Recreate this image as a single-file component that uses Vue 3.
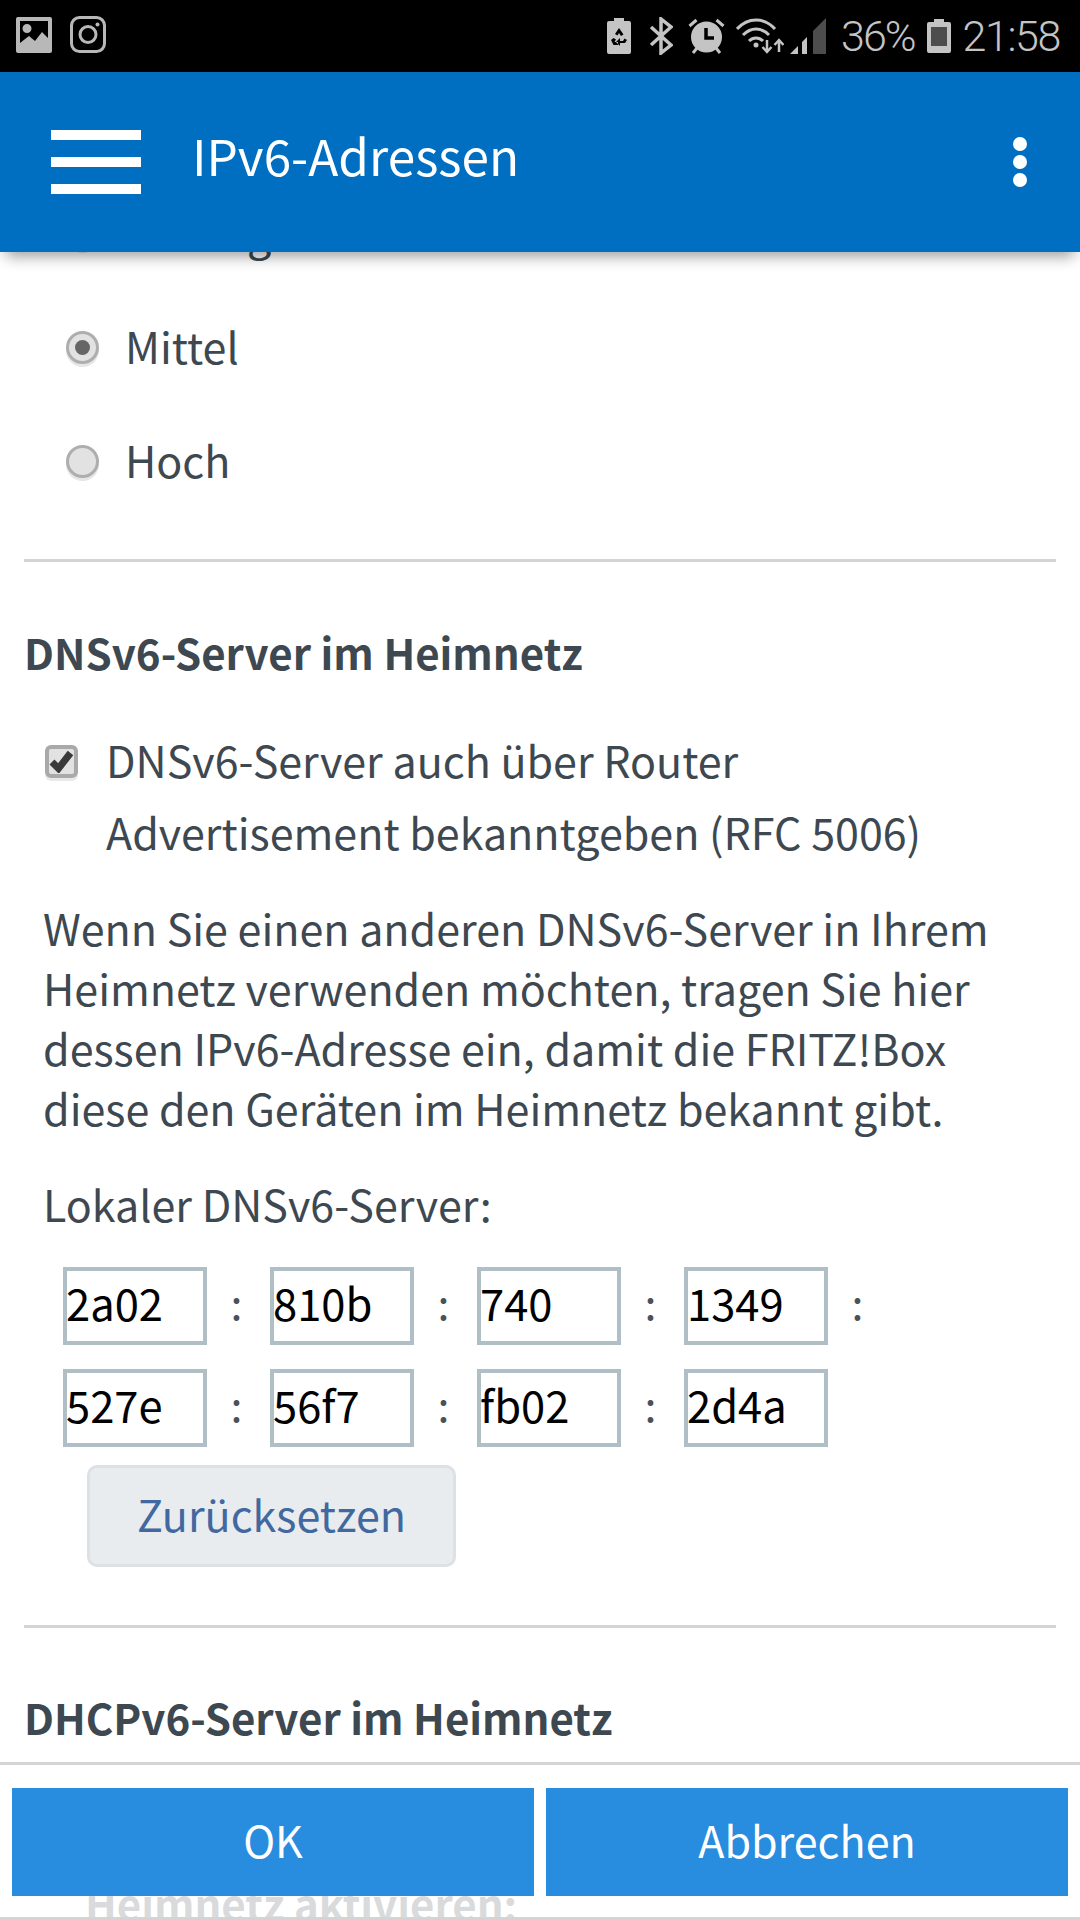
<script setup>
const rows = [
  [{ v: '2a02' }, { v: '810b' }, { v: '740' }, { v: '1349' }],
  [{ v: '527e' }, { v: '56f7' }, { v: 'fb02' }, { v: '2d4a' }],
]
</script>

<template>
  <div class="page">
    <div class="status">
      <div class="status-left">
        <svg width="36" height="36" viewBox="0 0 36 36"><path fill="#b8b8b8" fill-rule="evenodd" d="M2 0h32a2 2 0 0 1 2 2v32a2 2 0 0 1-2 2H2a2 2 0 0 1-2-2V2a2 2 0 0 1 2-2zM4 4v22l9-7 6 5 7-9 6 6V4zM11 7a4.500 4.500 0 1 1 0 9 4.500 4.500 0 0 1 0-9z"/></svg>
        <svg width="36" height="37" viewBox="0 0 36 37" fill="none" stroke="#b8b8b8" stroke-width="3"><rect x="1.500" y="1.500" width="33" height="34" rx="8"/><circle cx="18" cy="18.500" r="8"/><circle cx="27.500" cy="8.500" r="2" fill="#b8b8b8" stroke="none"/></svg>
      </div>
      <div class="status-right">
        <svg width="24" height="36" viewBox="0 0 24 36"><path fill="#c4c4c4" fill-rule="evenodd" d="M7 0h10v3h5a2 2 0 0 1 2 2v29a2 2 0 0 1-2 2H2a2 2 0 0 1-2-2V5a2 2 0 0 1 2-2h5zM12 10l-4 6 2.500 1.500L12 15l2 3 2.500-1.500zM4 22l2.500 5H11v-3H7.500l1.500-2.500-2.500-1.500zM20 22l-2.500-1.500-1.500 2.500H13v-3l-4 4 4 4v-3h5z"/></svg>
        <svg class="ml-18" width="24" height="38" viewBox="0 0 24 38" fill="none" stroke="#c4c4c4" stroke-width="3.500"><path d="M2 10l20 18-10 8V2l10 8L2 28"/></svg>
        <svg class="ml-15" width="37" height="36" viewBox="0 0 37 36"><circle cx="18.500" cy="19" r="15.500" fill="#c4c4c4"/><path d="M1.500 8l7-6M35.500 8l-7-6M5 35l4-5M32 35l-4-5" stroke="#c4c4c4" stroke-width="3" fill="none"/><path d="M18 10v10h8" stroke="#000" stroke-width="3.500" fill="none"/></svg>
        <svg class="ml-11" width="48" height="36" viewBox="0 0 48 36" fill="none" stroke="#c4c4c4" stroke-width="3"><path d="M1 11C12-1 28-1 39 11M7 17c8-8 18-8 26 0M13 23c4-4 10-4 14 0"/><circle cx="20" cy="27" r="2.500" fill="#c4c4c4" stroke="none"/><path d="M31 22v12M26.500 29l4.500 5 4.500-5M43 34V22M38.500 27l4.500-5 4.500 5" stroke-width="2.500"/></svg>
        <svg class="ml-6" width="36" height="36" viewBox="0 0 36 36"><path fill="#c4c4c4" d="M0 36l8-8v8zM12 36V24l5-5v17z"/><path fill="#4d4d4d" d="M23 36V13L36 0v36z"/></svg>
        <span class="pct">36%</span>
        <svg class="ml-12" width="24" height="34" viewBox="0 0 24 34"><path fill="#c4c4c4" d="M7 0h10v3h5a2 2 0 0 1 2 2v27a2 2 0 0 1-2 2H2a2 2 0 0 1-2-2V5a2 2 0 0 1 2-2h5z"/><rect x="4" y="8" width="16" height="19" fill="#4d4d4d"/></svg>
        <span class="time">21:58</span>
      </div>
    </div>

    <header class="appbar">
      <div class="burger"><i></i><i></i><i></i></div>
      <div class="title">IPv6-Adressen</div>
      <div class="dots"><i></i><i></i><i></i></div>
    </header>

    <main class="content">
      <div class="radio-row first"><span class="radio"></span><span class="radio-text">Niedrig</span></div>
      <div class="radio-row"><span class="radio checked"></span><span class="radio-text">Mittel</span></div>
      <div class="radio-row"><span class="radio"></span><span class="radio-text">Hoch</span></div>

      <hr class="rule rule-a" />

      <h2 class="heading h-a">DNSv6-Server im Heimnetz</h2>

      <div class="check-row">
        <span class="check">
          <svg width="25" height="23" viewBox="0 0 25 23"><path d="M3 12l6.500 6.500L21.500 3" fill="none" stroke="#3a3a3a" stroke-width="7"/></svg>
        </span>
        <span class="check-text">DNSv6-Server auch über Router<br />Advertisement bekanntgeben (RFC 5006)</span>
      </div>

      <p class="para">Wenn Sie einen anderen DNSv6-Server in Ihrem<br />Heimnetz verwenden möchten, tragen Sie hier<br />dessen IPv6-Adresse ein, damit die FRITZ!Box<br />diese den Geräten im Heimnetz bekannt gibt.</p>

      <div class="label">Lokaler DNSv6-Server:</div>

      <div class="ip-grid">
        <div v-for="(row, r) in rows" :key="r" class="ip-row">
          <template v-for="(cell, c) in row" :key="c">
            <div class="ip-box">{{ cell.v }}</div>
            <span v-if="c < 3 || r === 0" class="colon">:</span>
          </template>
        </div>
      </div>

      <div class="reset">Zurücksetzen</div>

      <hr class="rule rule-b" />

      <h2 class="heading h-b">DHCPv6-Server im Heimnetz</h2>

      <div class="ghost">Heimnetz aktivieren:</div>
    </main>

    <footer class="actions">
      <div class="btn">OK</div>
      <div class="btn">Abbrechen</div>
    </footer>
  </div>
</template>

<style>
html, body { margin: 0; background: #fff; }
</style>

<style scoped>
.page {
  position: relative;
  width: 1080px;
  height: 1920px;
  overflow: hidden;
  background: #fff;
  color: #3e4850;
  font-family: "Noto Sans CJK SC", "Noto Sans", sans-serif;
  font-size: 43px;
}
.status {
  position: relative;
  z-index: 3;
  height: 72px;
  background: #000;
  display: flex;
  justify-content: space-between;
  align-items: center;
  padding: 0 20px 0 16px;
}
.status-left { display: flex; align-items: center; gap: 18px; margin-top: -3px; }
.status-right { display: flex; align-items: center; margin-top: -1px; }
.ml-18 { margin-left: 18px; }
.ml-15 { margin-left: 15px; }
.ml-11 { margin-left: 11px; }
.ml-6 { margin-left: 6px; }
.ml-12 { margin-left: 12px; }
.pct, .time {
  font-family: Roboto, sans-serif;
  font-weight: 300;
  color: #c4c4c4;
  font-size: 43px;
  line-height: 76px;
  letter-spacing: -2px;
}
.pct { margin-left: 15px; }
.time { margin-left: 12px; letter-spacing: -1.400px; }
.appbar {
  position: relative;
  z-index: 2;
  height: 180px;
  background: #006fc1;
  color: #fff;
  display: flex;
  align-items: center;
  box-shadow: 0 10px 14px -6px rgba(0, 0, 0, .4);
}
.burger {
  margin-left: 51px;
  width: 90px;
  display: flex;
  flex-direction: column;
  gap: 17px;
}
.burger i { display: block; height: 10px; background: #fff; }
.title { margin-left: 51px; font-size: 49.500px; line-height: 60px; margin-top: -14px; }
.dots {
  margin-left: auto;
  margin-right: 53px;
  display: flex;
  flex-direction: column;
  gap: 4px;
}
.dots i { display: block; width: 14px; height: 14px; border-radius: 50%; background: #fff; }
.content { padding: 0 24px; }
.radio-row {
  height: 114px;
  display: flex;
  align-items: center;
  gap: 26px;
  padding-left: 42px;
}
.radio-text { line-height: 60px; margin-bottom: 6px; }
.radio-row.first { margin-top: -75px; }
.radio {
  box-sizing: border-box;
  width: 33px;
  height: 33px;
  margin-top: -1px;
  border-radius: 50%;
  border: 3px solid #aeaeae;
  background: #e2e2e2;
  box-shadow: 0 3px 0 #e6e6e6;
  display: flex;
  align-items: center;
  justify-content: center;
}
.radio.checked::after {
  content: "";
  width: 15px;
  height: 15px;
  border-radius: 50%;
  background: #666;
}
.rule { border: 0; height: 3px; background: #d4d4d4; margin: 0; }
.rule-a { margin-top: 40px; }
.rule-b { margin-top: 58px; }
.heading {
  margin: 0;
  font-size: 42px;
  font-weight: 700;
  line-height: 60px;
}
.h-a { margin-top: 60px; }
.h-b { margin-top: 59px; }
.check-row { display: flex; margin-top: 41px; padding-left: 21px; }
.check {
  box-sizing: border-box;
  width: 33px;
  height: 33px;
  margin-top: 22px;
  border: 4px solid #a9a9a9;
  border-radius: 6px;
  background: #e2e2e2;
  box-shadow: 0 3px 0 #e9e9e9;
  display: flex;
  align-items: center;
  justify-content: center;
}
.check svg { flex: none; }
.check-text { margin-left: 28px; line-height: 72px; white-space: nowrap; }
.para { margin: 30px 0 0 19px; line-height: 60px; white-space: nowrap; }
.label { margin: 36px 0 0 19px; line-height: 60px; }
.ip-grid {
  margin: 34px 0 0 39px;
  display: flex;
  flex-direction: column;
  gap: 24px;
}
.ip-row { display: flex; align-items: center; }
.ip-box {
  box-sizing: border-box;
  width: 144px;
  height: 78px;
  border: 4px solid #b0bec5;
  color: #000;
  font-size: 43.500px;
  line-height: 64px;
  text-indent: -1px;
}
.colon { width: 59px; margin-right: 4px; text-align: center; line-height: 66px; margin-top: -10px; color: #4a5158; }
.reset {
  box-sizing: border-box;
  margin: 18px 0 0 63px;
  width: 369px;
  height: 102px;
  border: 3px solid #dce1e6;
  border-radius: 10px;
  background: #e9ecef;
  color: #41689f;
  text-align: center;
  line-height: 90px;
}
.ghost {
  margin: 126px 0 0 61px;
  font-size: 42px;
  font-weight: 700;
  line-height: 60px;
  white-space: nowrap;
}
.actions {
  position: absolute;
  left: 0;
  right: 0;
  bottom: 0;
  box-sizing: border-box;
  height: 158px;
  padding: 23px 12px 0;
  display: flex;
  align-items: flex-start;
  gap: 12px;
  background: rgba(255, 255, 255, .8);
  border-top: 3px solid #d4d4d4;
  border-bottom: 3px solid #d4d4d4;
}
.btn {
  flex: 1;
  height: 108px;
  background: #288cdf;
  color: #fff;
  text-align: center;
  line-height: 102px;
}
</style>
